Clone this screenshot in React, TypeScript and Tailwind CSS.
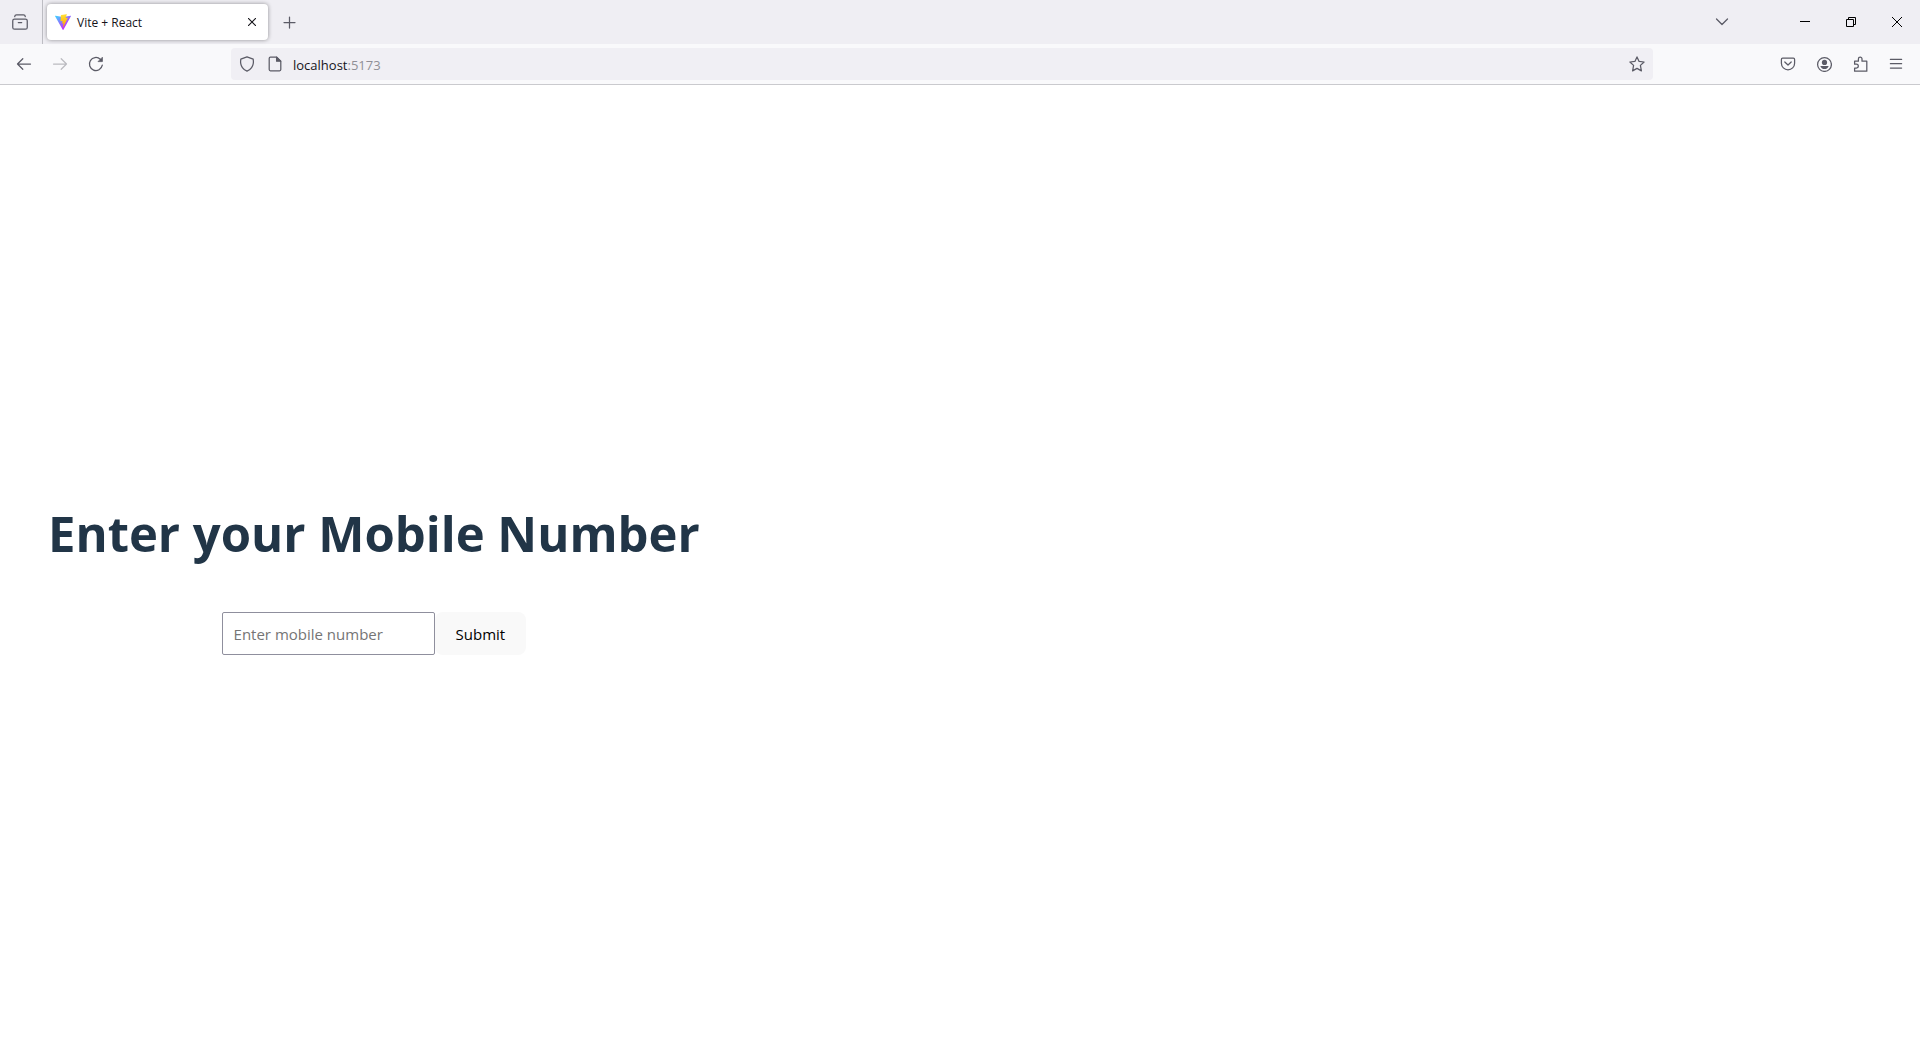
import type { ReactNode } from "react";

const FONT = "font-['Open_Sans','Noto_Sans',sans-serif]";

function Icon({ children, size = 16 }: { children: ReactNode; size?: number }) {
  return (
    <svg
      width={size}
      height={size}
      viewBox="0 0 16 16"
      fill="none"
      stroke="currentColor"
      strokeWidth="1.25"
      strokeLinecap="round"
      strokeLinejoin="round"
      aria-hidden="true"
    >
      {children}
    </svg>
  );
}

function ToolButton({
  label,
  disabled,
  children,
}: {
  label: string;
  disabled?: boolean;
  children: ReactNode;
}) {
  return (
    <button
      type="button"
      aria-label={label}
      disabled={disabled}
      className="flex h-8 w-9 shrink-0 items-center justify-center text-[#5b5b66] disabled:text-[#bbbbc0]"
    >
      {children}
    </button>
  );
}

function WindowButton({ label, children }: { label: string; children: ReactNode }) {
  return (
    <button
      type="button"
      aria-label={label}
      className="flex h-11 w-[46px] items-center justify-center text-black"
    >
      <svg
        width="10"
        height="10"
        viewBox="0 0 10 10"
        fill="none"
        stroke="currentColor"
        strokeWidth="1"
        aria-hidden="true"
      >
        {children}
      </svg>
    </button>
  );
}

function ViteLogo() {
  return (
    <svg width="16" height="16" viewBox="0 0 256 257" aria-hidden="true">
      <defs>
        <linearGradient id="vite-a" x1="-.828%" x2="57.636%" y1="7.652%" y2="78.411%">
          <stop offset="0%" stopColor="#41D1FF" />
          <stop offset="100%" stopColor="#BD34FE" />
        </linearGradient>
        <linearGradient id="vite-b" x1="43.376%" x2="50.316%" y1="2.242%" y2="89.03%">
          <stop offset="0%" stopColor="#FFEA83" />
          <stop offset="8.333%" stopColor="#FFDD35" />
          <stop offset="100%" stopColor="#FFA800" />
        </linearGradient>
      </defs>
      <path
        fill="url(#vite-a)"
        d="M255.153 37.938L134.897 252.976c-2.483 4.44-8.862 4.466-11.382.048L.875 37.958c-2.746-4.814 1.371-10.646 6.827-9.67l120.385 21.517a6.537 6.537 0 0 0 2.322-.004l117.867-21.483c5.438-.991 9.574 4.796 6.877 9.62Z"
      />
      <path
        fill="url(#vite-b)"
        d="M185.432.063L96.44 17.501a3.268 3.268 0 0 0-2.634 3.014l-5.474 92.456a3.268 3.268 0 0 0 3.997 3.378l24.777-5.718c2.318-.535 4.413 1.507 3.936 3.838l-7.361 36.047c-.495 2.426 1.782 4.5 4.151 3.78l15.304-4.649c2.372-.72 4.652 1.36 4.15 3.788l-11.698 56.621c-.732 3.542 3.979 5.473 5.943 2.437l1.313-2.028l72.516-144.72c1.215-2.423-.88-5.186-3.54-4.672l-25.505 4.922c-2.396.462-4.435-1.77-3.759-4.114l16.646-57.705c.677-2.35-1.37-4.583-3.769-4.113Z"
      />
    </svg>
  );
}

function TabStrip() {
  return (
    <div className="flex h-11 items-center bg-[#efeef3]">
      <div className="flex h-full w-[43px] items-center border-r border-[#bdbdc3] pl-0.5">
        <ToolButton label="View recent browsing">
          <Icon>
            <rect x=".75" y="5" width="14.5" height="10.2" rx="1.8" />
            <path d="M2.7 2.6Q2.9.8 4.5.8h7q1.6 0 1.8 1.8M6.3 8.5h3.4" />
          </Icon>
        </ToolButton>
      </div>
      <div className="ml-1 flex h-9 w-[221px] items-center rounded bg-white pr-1 pl-2 shadow-[0_0_4px_rgba(0,0,0,0.4)]">
        <ViteLogo />
        <span className="ml-1.5 flex-1 pt-0.5 text-[12px] leading-4 text-[#15141a]">Vite + React</span>
        <button
          type="button"
          aria-label="Close tab"
          className="flex size-6 items-center justify-center text-[#15141a]"
        >
          <svg width="8" height="8" viewBox="0 0 8 8" stroke="currentColor" strokeWidth="1.1" aria-hidden="true">
            <path d="m0 0 8 8M8 0 0 8" />
          </svg>
        </button>
      </div>
      <div className="ml-1">
        <ToolButton label="Open a new tab">
          <Icon>
            <path d="M7.5 3v11M2 8.5h11" />
          </Icon>
        </ToolButton>
      </div>
      <div className="ml-auto flex items-center">
        <div className="mr-[42px]">
          <ToolButton label="List all tabs">
            <Icon>
              <path d="m2.5 5 5.5 5.5L13.5 5" />
            </Icon>
          </ToolButton>
        </div>
        <WindowButton label="Minimize">
          <path d="M0 4.5h10" />
        </WindowButton>
        <WindowButton label="Restore">
          <path d="M.5 2.5h7v7h-7zM2.5 2.5v-2h7v7h-2" />
        </WindowButton>
        <WindowButton label="Close">
          <path d="m0 0 10 10M10 0 0 10" />
        </WindowButton>
      </div>
    </div>
  );
}

function Toolbar() {
  return (
    <div className="flex items-center border-b border-[#cacace] bg-[#f9f9fb] px-1.5 py-1">
      <ToolButton label="Back">
        <Icon>
          <path d="M14.5 8H1.5M6.8 2.7 1.5 8l5.3 5.3" />
        </Icon>
      </ToolButton>
      <ToolButton label="Forward" disabled>
        <Icon>
          <path d="M1.5 8h13M9.2 2.7 14.5 8l-5.3 5.3" />
        </Icon>
      </ToolButton>
      <ToolButton label="Reload">
        <Icon>
          <path d="M14.3 9.2A6.5 6.5 0 1 1 12.3 3.2L13.5 4.4" />
          <path d="M14.4 1.6v4h-4z" fill="currentColor" strokeWidth=".8" />
        </Icon>
      </ToolButton>
      <div className="mx-[117px] flex h-8 flex-1 items-center rounded bg-[#f0eff4] px-2 text-[#5b5b66]">
        <Icon>
          <path d="M8 .8 14.2 3.1Q15 8.2 12.6 11.6 10.9 14 8 15.2 5.1 14 3.4 11.6 1 8.2 1.8 3.1Z" />
        </Icon>
        <span className="ml-3">
          <Icon>
            <path d="M9.6 1.2H3.4Q2.2 1.2 2.2 2.4v11.2q0 1.2 1.2 1.2h9.2q1.2 0 1.2-1.2V5.2z" />
            <path d="M9.6 1.2v4h4z" fill="currentColor" />
          </Icon>
        </span>
        <a
          href="http://localhost:5173"
          className="ml-2.5 flex-1 pt-0.5 text-[13px] leading-5 text-[#8f8f97]"
        >
          <span className="text-[#15141a]">localhost</span>:5173
        </a>
        <button type="button" aria-label="Bookmark this page">
          <Icon>
            <path d="M8 .9 10.1 5.4 15.1 6 11.4 9.4 12.4 14.9 8 12.4 3.6 14.9 4.6 9.4.9 6 5.9 5.4Z" />
          </Icon>
        </button>
      </div>
      <ToolButton label="Save to Pocket">
        <Icon>
          <path d="M2.6 2.2h10.8q1.2 0 1.2 1.2v3.8a6.6 6.6 0 0 1-13.2 0V3.4q0-1.2 1.2-1.2z" />
          <path d="M4.8 6 8 9l3.2-3" />
        </Icon>
      </ToolButton>
      <ToolButton label="Account">
        <Icon>
          <circle cx="8.5" cy="8.5" r="6.9" />
          <circle cx="8.5" cy="6.4" r="2.6" fill="currentColor" stroke="none" />
          <path d="M4.3 10h8.4q-1 3.1-4.2 3.1T4.3 10z" fill="currentColor" stroke="none" />
        </Icon>
      </ToolButton>
      <ToolButton label="Extensions">
        <Icon>
          <path d="M2.6 15.2V12h1.8a1.9 1.9 0 0 0 0-3.8H2.6V5.2h3.8V2.9a1.8 1.8 0 0 1 3.6 0v2.3h4.8v10z" />
        </Icon>
      </ToolButton>
      <ToolButton label="Open application menu">
        <Icon>
          <path d="M2.4 3.4h11.2M2.4 7.7h11.2M2.4 12h11.2" />
        </Icon>
      </ToolButton>
    </div>
  );
}

export default function App() {
  return (
    <div className={`flex min-h-screen flex-col bg-white ${FONT}`}>
      <header>
        <TabStrip />
        <Toolbar />
      </header>
      <main className="flex flex-1 items-center pl-12">
        <div className="flex flex-col items-center gap-[51px] pt-[34px]">
          <h1 className="text-[49px] leading-[56px] font-bold whitespace-nowrap text-[#213547]">
            Enter your Mobile Number
          </h1>
          <form className="flex" onSubmit={(event) => event.preventDefault()}>
            <input
              type="tel"
              aria-label="Mobile number"
              placeholder="Enter mobile number"
              className="h-[43px] w-[213px] rounded-xs border border-[#8f8f9d] bg-white px-[11px] pt-0.5 text-[15px] text-[#213547] placeholder:text-[#757575]"
            />
            <button
              type="submit"
              className="h-[43px] rounded-lg bg-[#f9f9f9] px-[21px] pt-0.5 text-[15px] text-black"
            >
              Submit
            </button>
          </form>
        </div>
      </main>
    </div>
  );
}
